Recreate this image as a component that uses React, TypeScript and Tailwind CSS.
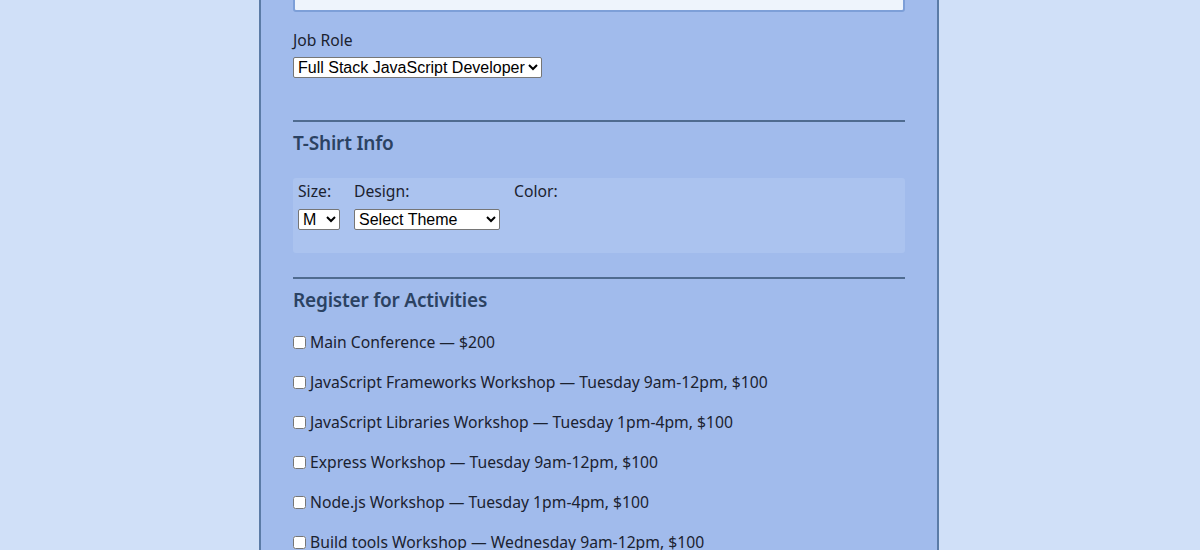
const activities = [
  "Main Conference — $200",
  "JavaScript Frameworks Workshop — Tuesday 9am-12pm, $100",
  "JavaScript Libraries Workshop — Tuesday 1pm-4pm, $100",
  "Express Workshop — Tuesday 9am-12pm, $100",
  "Node.js Workshop — Tuesday 1pm-4pm, $100",
  "Build tools Workshop — Wednesday 9am-12pm, $100",
  "npm Workshop — Wednesday 1pm-4pm, $100",
];

const selectCls =
  "h-[21px] border border-[#767676] bg-white text-[16px] leading-[19px] text-black font-['Liberation_Sans',Arial,sans-serif] rounded-[2px]";

export default function App() {
  return (
    <div className="flex h-[550px] justify-center overflow-hidden bg-[#d0e0f8] pr-[2px] font-['Noto_Sans',sans-serif] text-[15.7px] text-[#1b2230]">
      <div className="-mt-[24px] w-[680px] shrink-0 self-start border-x-2 border-[#5b7ba6] bg-[#a1bbec] px-8 pb-10">
        <input
          type="text"
          className="block h-[36px] w-full rounded-[3px] border-2 border-[#7d9fd8] bg-[#eef4fc] px-2"
        />

        <label className="mt-[18px] block leading-5">Job Role</label>
        <select className={`mt-[7px] block w-[249px] ${selectCls}`} defaultValue="fs">
          <option value="fs">Full Stack JavaScript Developer</option>
        </select>

        <hr className="mt-[42px] border-t-2 border-[#4f6b90]" />
        <h2 className="mt-[7px] text-[19px] font-semibold leading-7 tracking-[-0.2px] text-[#2b4262]">
          T-Shirt Info
        </h2>

        <div className="mt-[21px] flex h-[75px] gap-[14px] rounded-[3px] bg-[#abc3ef] px-[5px] pt-[3px]">
          <div className="flex flex-col">
            <label className="leading-5">Size:</label>
            <select className={`mt-2 w-[42px] ${selectCls}`} defaultValue="m">
              <option value="m">M</option>
            </select>
          </div>
          <div className="flex flex-col">
            <label className="leading-5">Design:</label>
            <select className={`mt-2 w-[146px] ${selectCls}`} defaultValue="s">
              <option value="s">Select Theme</option>
            </select>
          </div>
          <div className="flex flex-col">
            <label className="leading-5">Color:</label>
          </div>
        </div>

        <hr className="mt-[24px] border-t-2 border-[#4f6b90]" />
        <h2 className="mt-[7px] text-[19px] font-semibold leading-7 tracking-[-0.2px] text-[#2b4262]">
          Register for Activities
        </h2>

        <div className="mt-[18px] flex flex-col gap-5">
          {activities.map((a) => (
            <label key={a} className="flex items-center leading-5">
              <input type="checkbox" className="m-0 mr-[4px] h-[13px] w-[13px]" />
              {a}
            </label>
          ))}
        </div>
      </div>
    </div>
  );
}
